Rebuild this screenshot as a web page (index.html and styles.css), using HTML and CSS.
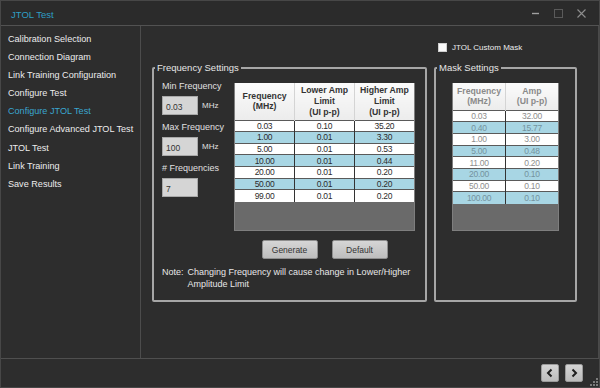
FILE: index.html
```html
<!DOCTYPE html>
<html>
<head>
<meta charset="utf-8">
<title>JTOL Test</title>
<link rel="stylesheet" href="styles.css">
</head>
<body>
<div class="window">
  <header class="titlebar">
    <span class="title">JTOL Test</span>
    <div class="controls">
      <svg class="ctl" width="9" height="9" viewBox="0 0 9 9"><line x1="1" y1="4.5" x2="8" y2="4.5" stroke="#a0a0a0" stroke-width="1.4"/></svg>
      <svg class="ctl" width="9" height="9" viewBox="0 0 9 9"><rect x="0.5" y="0.5" width="8" height="8" fill="none" stroke="#5a5a5a" stroke-width="1"/></svg>
      <svg class="ctl" width="9" height="9" viewBox="0 0 9 9"><path d="M0.5 0.5 L8.5 8.5 M8.5 0.5 L0.5 8.5" stroke="#8e8e8e" stroke-width="1.1"/></svg>
    </div>
  </header>
  <div class="body">
    <nav class="sidebar">
      <div class="nav-item">Calibration Selection</div>
      <div class="nav-item">Connection Diagram</div>
      <div class="nav-item">Link Training Configuration</div>
      <div class="nav-item">Configure Test</div>
      <div class="nav-item active">Configure JTOL Test</div>
      <div class="nav-item">Configure Advanced JTOL Test</div>
      <div class="nav-item">JTOL Test</div>
      <div class="nav-item">Link Training</div>
      <div class="nav-item">Save Results</div>
    </nav>
    <main class="content">
      <div class="layout">
        <div class="spacer"></div>
        <div class="check"><span class="box"></span><span>JTOL Custom Mask</span></div>

        <fieldset class="fs">
          <legend>Frequency Settings</legend>
          <div class="fs-body freq-body">
            <div class="freq-row">
              <div class="inputs">
                <div class="field-label">Min Frequency</div>
                <div class="input-row"><div class="input">0.03</div><span class="unit">MHz</span></div>
                <div class="field-label">Max Frequency</div>
                <div class="input-row"><div class="input">100</div><span class="unit">MHz</span></div>
                <div class="field-label">&#35; Frequencies</div>
                <div class="input-row"><div class="input">7</div></div>
              </div>
              <div class="table-col">
                <div class="grid-box freq-box">
                  <table class="grid freq">
                    <thead>
                      <tr><th>Frequency<br>(MHz)</th><th>Lower Amp<br>Limit<br>(UI p-p)</th><th>Higher Amp<br>Limit<br>(UI p-p)</th></tr>
                    </thead>
                    <tbody>
                      <tr><td>0.03</td><td>0.10</td><td>35.20</td></tr>
                      <tr class="alt"><td>1.00</td><td>0.01</td><td>3.30</td></tr>
                      <tr><td>5.00</td><td>0.01</td><td>0.53</td></tr>
                      <tr class="alt"><td>10.00</td><td>0.01</td><td>0.44</td></tr>
                      <tr><td>20.00</td><td>0.01</td><td>0.20</td></tr>
                      <tr class="alt"><td>50.00</td><td>0.01</td><td>0.20</td></tr>
                      <tr><td>99.00</td><td>0.01</td><td>0.20</td></tr>
                    </tbody>
                  </table>
                </div>
                <div class="btn-row">
                  <button class="btn">Generate</button>
                  <button class="btn">Default</button>
                </div>
              </div>
            </div>
            <div class="note"><span>Note:</span><span>Changing Frequency will cause change in Lower/Higher<br>Amplitude Limit</span></div>
          </div>
        </fieldset>

        <fieldset class="fs">
          <legend>Mask Settings</legend>
          <div class="fs-body mask-body">
            <div class="grid-box mask-box">
              <table class="grid mask">
                <thead>
                  <tr><th>Frequency<br>(MHz)</th><th>Amp<br>(UI p-p)</th></tr>
                </thead>
                <tbody>
                  <tr><td>0.03</td><td>32.00</td></tr>
                  <tr class="alt"><td>0.40</td><td>15.77</td></tr>
                  <tr><td>1.00</td><td>3.00</td></tr>
                  <tr class="alt"><td>5.00</td><td>0.48</td></tr>
                  <tr><td>11.00</td><td>0.20</td></tr>
                  <tr class="alt"><td>20.00</td><td>0.10</td></tr>
                  <tr><td>50.00</td><td>0.10</td></tr>
                  <tr class="alt"><td>100.00</td><td>0.10</td></tr>
                </tbody>
              </table>
            </div>
          </div>
        </fieldset>
      </div>
    </main>
  </div>
  <footer class="footer">
    <button class="nav-btn"><svg width="10" height="10" viewBox="0 0 10 10"><path d="M6.5 1.5 L3 5 L6.5 8.5" fill="none" stroke="#1e1e1e" stroke-width="2"/></svg></button>
    <button class="nav-btn"><svg width="10" height="10" viewBox="0 0 10 10"><path d="M3.5 1.5 L7 5 L3.5 8.5" fill="none" stroke="#1e1e1e" stroke-width="2"/></svg></button>
    <svg class="grip" width="8" height="8" viewBox="0 0 8 8">
      <rect x="6" y="0" width="2" height="2" fill="#7a7a7a"/>
      <rect x="3" y="3" width="2" height="2" fill="#7a7a7a"/>
      <rect x="6" y="3" width="2" height="2" fill="#7a7a7a"/>
      <rect x="0" y="6" width="2" height="2" fill="#7a7a7a"/>
      <rect x="3" y="6" width="2" height="2" fill="#7a7a7a"/>
      <rect x="6" y="6" width="2" height="2" fill="#7a7a7a"/>
    </svg>
  </footer>
</div>
</body>
</html>
```

FILE: styles.css
```css
* { box-sizing: border-box; }

html, body {
  margin: 0;
  padding: 0;
  background: #2d2d2d;
}

body {
  width: 600px;
  height: 388px;
  overflow: hidden;
  font-family: "Liberation Sans", Arial, sans-serif;
  color: #e2e2e2;
}

.window {
  width: 600px;
  height: 388px;
  border: 1px solid #474747;
  display: flex;
  flex-direction: column;
  background: #2d2d2d;
}

.titlebar {
  height: 25px;
  flex: none;
  border-bottom: 1px solid #525252;
  display: flex;
  align-items: center;
  justify-content: space-between;
  padding: 0 13px 0 10px;
  background: #2b2b2b;
}

.title {
  font-size: 9.5px;
  color: #2e9ec4;
  padding-top: 3px;
}

.controls {
  display: flex;
  gap: 14px;
  align-items: center;
}

.ctl { display: block; }

.body {
  flex: 1;
  display: flex;
  min-height: 0;
}

.sidebar {
  width: 140px;
  flex: none;
  border-right: 1px solid #4c4c4c;
  padding: 4px 0 0 7px;
}

.nav-item {
  font-size: 9.1px;
  line-height: 18.1px;
  color: #ececec;
  white-space: nowrap;
}

.nav-item.active { color: #3aa6cf; }

.content {
  flex: 1;
  border-right: 1px solid #4a4a4a;
  padding: 15px 0 0 11px;
}

.layout {
  display: grid;
  grid-template-columns: 275px 143px;
  grid-template-rows: 12px auto;
  column-gap: 7px;
  row-gap: 9px;
}

.check {
  display: flex;
  align-items: center;
  gap: 5px;
  padding-left: 4px;
  font-size: 8px;
  color: #ececec;
}

.box {
  width: 9px;
  height: 9px;
  background: #fafafa;
  border: 1px solid #cfcfcf;
}

.fs {
  margin: 0;
  padding: 0;
  min-width: 0;
  height: 240px;
  border: 2px solid #a6a6a6;
  border-radius: 2px;
}

.fs legend {
  margin-left: 1px;
  padding: 0 2px;
  font-size: 9.5px;
  line-height: 12px;
  color: #e6e6e6;
}

.freq-body { padding: 6px 10px 0 8px; }

.freq-row { display: flex; }

.inputs { width: 72px; flex: none; }

.field-label {
  font-size: 9px;
  line-height: 12px;
  color: #e0e0e0;
  white-space: nowrap;
}

.input-row {
  display: flex;
  align-items: center;
  gap: 4px;
  margin: 4px 0 6px;
}

.input {
  width: 36px;
  height: 19px;
  background: #d5d5d5;
  border: 1px solid #a9a9a9;
  font-size: 8.5px;
  color: #333;
  padding: 5px 0 0 3px;
}

.unit {
  font-size: 8px;
  color: #e0e0e0;
}

.table-col {
  width: 181px;
  flex: none;
  margin-top: 3px;
}

.grid-box {
  height: 148px;
  background: #6a6a6a;
  border: 1px solid #7e7e7e;
  border-top: none;
}

.grid {
  width: 100%;
  border-collapse: collapse;
  table-layout: fixed;
}

.grid th {
  padding: 0;
  font-size: 8.7px;
  line-height: 10.7px;
  font-weight: bold;
  color: #333;
  background: linear-gradient(#fbfbfb, #ececec);
  border-left: 1px solid #d4d4d4;
}

.grid th:first-child { border-left: none; }

.freq th { height: 37px; }
.mask th { height: 27px; color: #8a8a8a; }

.grid td {
  padding: 0;
  height: 11.67px;
  font-size: 8.5px;
  letter-spacing: -0.3px;
  line-height: 10px;
  text-align: center;
  color: #2c2c2c;
  background: #ffffff;
  border-top: 1px solid #5a5a5a;
  border-left: 1px solid #333;
}

.grid td:first-child { border-left: none; }

.grid tr.alt td { background: #a8d6e4; }

.mask td { height: 11.7px; color: #8e8e8e; }
.mask tr.alt td { color: #74939e; }

.btn-row {
  display: flex;
  justify-content: center;
  gap: 14px;
  margin-top: 9px;
}

.btn {
  width: 56px;
  height: 19px;
  padding: 0;
  font-family: inherit;
  font-size: 8.5px;
  color: #333;
  background: linear-gradient(#d6d6d6, #bdbdbd);
  border: 1px solid #8e8e8e;
  border-radius: 2px;
}

.note {
  display: flex;
  gap: 4px;
  margin-top: 7px;
  font-size: 9px;
  line-height: 12px;
  color: #e8e8e8;
  white-space: nowrap;
}

.mask-body { padding-top: 6px; }

.mask-box {
  width: 107px;
  margin: 3px auto 0;
}

.footer {
  height: 29px;
  flex: none;
  border-top: 1px solid #4f4f4f;
  display: flex;
  align-items: center;
  justify-content: flex-end;
  gap: 6px;
  padding-right: 1px;
}

.nav-btn {
  width: 18px;
  height: 18px;
  padding: 0;
  display: flex;
  align-items: center;
  justify-content: center;
  background: linear-gradient(#d4d4d4, #bcbcbc);
  border: 1px solid #9a9a9a;
  border-radius: 2px;
}

.nav-btn svg { display: block; }

.grip {
  align-self: flex-end;
  margin-left: 1px;
  margin-bottom: 1px;
}
```
